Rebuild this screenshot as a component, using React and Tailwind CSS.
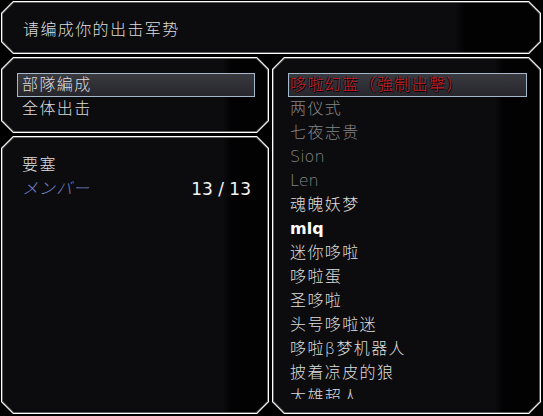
import React from "react";

const FONT = { fontFamily: '"DejaVu Sans", "Noto Sans CJK SC", sans-serif' };

const ITEMS = [
  { name: "哆啦幻蓝（強制出撃）", tone: "red" },
  { name: "两仪式", tone: "dim" },
  { name: "七夜志贵", tone: "dim" },
  { name: "Sion", tone: "dimLatin" },
  { name: "Len", tone: "dimLatin" },
  { name: "魂魄妖梦", tone: "on" },
  { name: "mlq", tone: "bold" },
  { name: "迷你哆啦", tone: "on" },
  { name: "哆啦蛋", tone: "on" },
  { name: "圣哆啦", tone: "on" },
  { name: "头号哆啦迷", tone: "on" },
  { name: "哆啦β梦机器人", tone: "on" },
  { name: "披着凉皮的狼", tone: "on" },
  { name: "大雄超人", tone: "on" },
];

const TONES = {
  red: "text-[#c81e28] [text-shadow:1px_1px_0_#000,-1px_0_0_#200]",
  dim: "text-[#858585]",
  dimLatin: "text-[#858585] tracking-normal",
  on: "text-[#dcdcdc]",
  bold: "text-white font-bold tracking-normal",
};

function Panel({ className = "", shade = "narrow", children }) {
  const bg =
    shade === "wide"
      ? "bg-[linear-gradient(to_right,#0c0c0f_calc(100%_-_84px),#020203_calc(100%_-_74px))]"
      : "bg-[linear-gradient(to_right,#0c0c0f_calc(100%_-_44px),#020203_calc(100%_-_36px))]";
  return (
    <div className={`bg-white p-px [clip-path:polygon(12px_0,calc(100%_-_12px)_0,100%_12px,100%_calc(100%_-_12px),calc(100%_-_12px)_100%,12px_100%,0_calc(100%_-_12px),0_12px)] ${className}`}>
      <div className="h-full bg-[#5c5c5c] p-px [clip-path:polygon(11.4px_0,calc(100%_-_11.4px)_0,100%_11.4px,100%_calc(100%_-_11.4px),calc(100%_-_11.4px)_100%,11.4px_100%,0_calc(100%_-_11.4px),0_11.4px)]">
        <div className={`h-full ${bg} [clip-path:polygon(10.8px_0,calc(100%_-_10.8px)_0,100%_10.8px,100%_calc(100%_-_10.8px),calc(100%_-_10.8px)_100%,10.8px_100%,0_calc(100%_-_10.8px),0_10.8px)]`}>
          {children}
        </div>
      </div>
    </div>
  );
}

function Row({ selected, className = "", children }) {
  return (
    <div
      className={`h-[24px] leading-[22px] border ${
        selected
          ? "border-[#a4b8cc] bg-[linear-gradient(to_bottom,#393940,#26262c)]"
          : "border-transparent"
      } ${className}`}
    >
      {children}
    </div>
  );
}

export default function App() {
  return (
    <div
      className="w-[543px] h-[416px] bg-black flex flex-col gap-[3px] pt-[1px] pl-[1px] pr-[2px] pb-[2px] overflow-hidden text-[16px] tracking-[1.4px] font-light"
      style={FONT}
    >
      <Panel className="h-[53px] shrink-0" shade="wide">
        <div className="pl-[20px] pt-[15px] leading-[24px] text-[#dcdcdc]">请编成你的出击军势</div>
      </Panel>

      <div className="flex-1 flex gap-[3px] min-h-0">
        <div className="w-[268px] flex flex-col gap-[3px]">
          <Panel className="h-[76px] shrink-0">
            <div className="pt-[14px] pl-[14px] pr-[12px] text-[#dcdcdc]">
              <Row selected className="pl-[4px]">部隊編成</Row>
              <Row className="pl-[4px]">全体出击</Row>
            </div>
          </Panel>
          <Panel className="flex-1">
            <div className="pt-[15px] pl-[19px] pr-[16px] leading-[24px]">
              <div className="text-[#dcdcdc]">要塞</div>
              <div className="flex justify-between">
                <span className="text-[#7080c4] italic tracking-[1px]">メンバー</span>
                <span className="text-[#f4f4f4] text-[17px] font-normal tracking-normal">13 / 13</span>
              </div>
            </div>
          </Panel>
        </div>

        <Panel className="flex-1">
          <div className="pt-[14px] pl-[14px] pr-[12px]">
            <div className="h-[326px] overflow-hidden">
              {ITEMS.map((it, i) => (
                <Row key={it.name} selected={i === 0} className={`pl-px ${TONES[it.tone]}`}>
                  {it.name}
                </Row>
              ))}
            </div>
          </div>
        </Panel>
      </div>
    </div>
  );
}
